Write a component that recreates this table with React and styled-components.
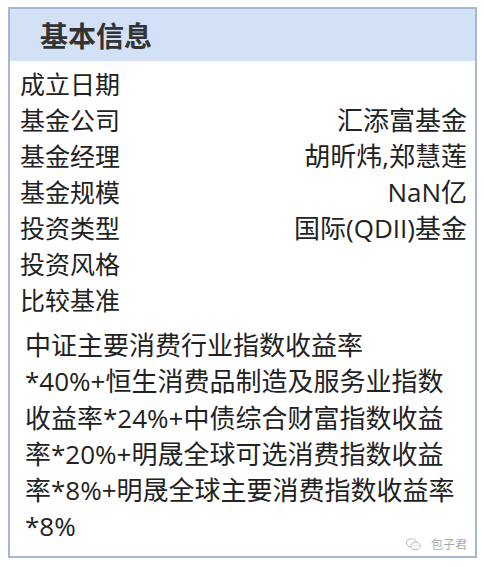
import React from "react";
import styled, { createGlobalStyle } from "styled-components";

const GlobalStyle = createGlobalStyle`
  body {
    margin: 0;
    background: #fff;
    font-family: "Open Sans", "Noto Sans CJK SC", sans-serif;
  }
`;

const rows = [
  { label: "成立日期", value: "" },
  { label: "基金公司", value: "汇添富基金" },
  { label: "基金经理", value: "胡昕炜,郑慧莲" },
  { label: "基金规模", value: "NaN亿" },
  { label: "投资类型", value: "国际(QDII)基金" },
  { label: "投资风格", value: "" },
  { label: "比较基准", value: "" },
];

// 原图里比较基准是手动断行的
const benchLines = [
  "中证主要消费行业指数收益率",
  "*40%+恒生消费品制造及服务业指数",
  "收益率*24%+中债综合财富指数收益",
  "率*20%+明晟全球可选消费指数收益",
  "率*8%+明晟全球主要消费指数收益率",
  "*8%",
];

const App = () => {
  return (
    <>
      <GlobalStyle />
      <Card>
        <Header>基本信息</Header>
        <RowList>
          {rows.map((r) => (
            <Row key={r.label}>
              <Label>{r.label}</Label>
              <Value>{r.value}</Value>
            </Row>
          ))}
        </RowList>
        <Bench>
          {benchLines.map((line) => (
            <BenchLine key={line}>{line}</BenchLine>
          ))}
        </Bench>
        <Watermark>
          <svg width="15" height="13" viewBox="0 0 15 13">
            <ellipse cx="5.5" cy="5" rx="5" ry="4.2" fill="none" stroke="#b8b8b8" strokeWidth="1" />
            <ellipse cx="9.5" cy="8" rx="4.6" ry="3.8" fill="#fff" stroke="#b8b8b8" strokeWidth="1" />
            <circle cx="8" cy="7.6" r="0.7" fill="#b8b8b8" />
            <circle cx="11" cy="7.6" r="0.7" fill="#b8b8b8" />
          </svg>
          <span>包子君</span>
        </Watermark>
      </Card>
    </>
  );
};

const Card = styled.div`
  position: relative;
  box-sizing: border-box;
  width: 469px;
  height: 551px;
  margin: 7px 0 0 8px;
  border: 2px solid #a4b8d6;
  background: #fff;
  color: #222;
`;

const Header = styled.div`
  height: 52px;
  display: flex;
  align-items: center;
  padding-left: 30px;
  background: #d2e1f6;
  font-size: 28px;
  font-weight: bold;
  color: #333;
`;

const RowList = styled.div`
  padding: 4px 8px 0 10px;
`;

const Row = styled.div`
  display: flex;
  justify-content: space-between;
  align-items: center;
  height: 36px;
  font-size: 25px;
`;

const Label = styled.span``;

const Value = styled.span`
  font-size: 26px;
`;

const Bench = styled.div`
  padding: 10px 0 0 15px;
  font-size: 26px;
  line-height: 36.3px;
`;

const BenchLine = styled.div`
  white-space: nowrap;
`;

const Watermark = styled.div`
  position: absolute;
  right: 8px;
  bottom: 3px;
  display: flex;
  align-items: center;
  gap: 10px;
  font-size: 12px;
  color: #aaa;
`;

export default App;
